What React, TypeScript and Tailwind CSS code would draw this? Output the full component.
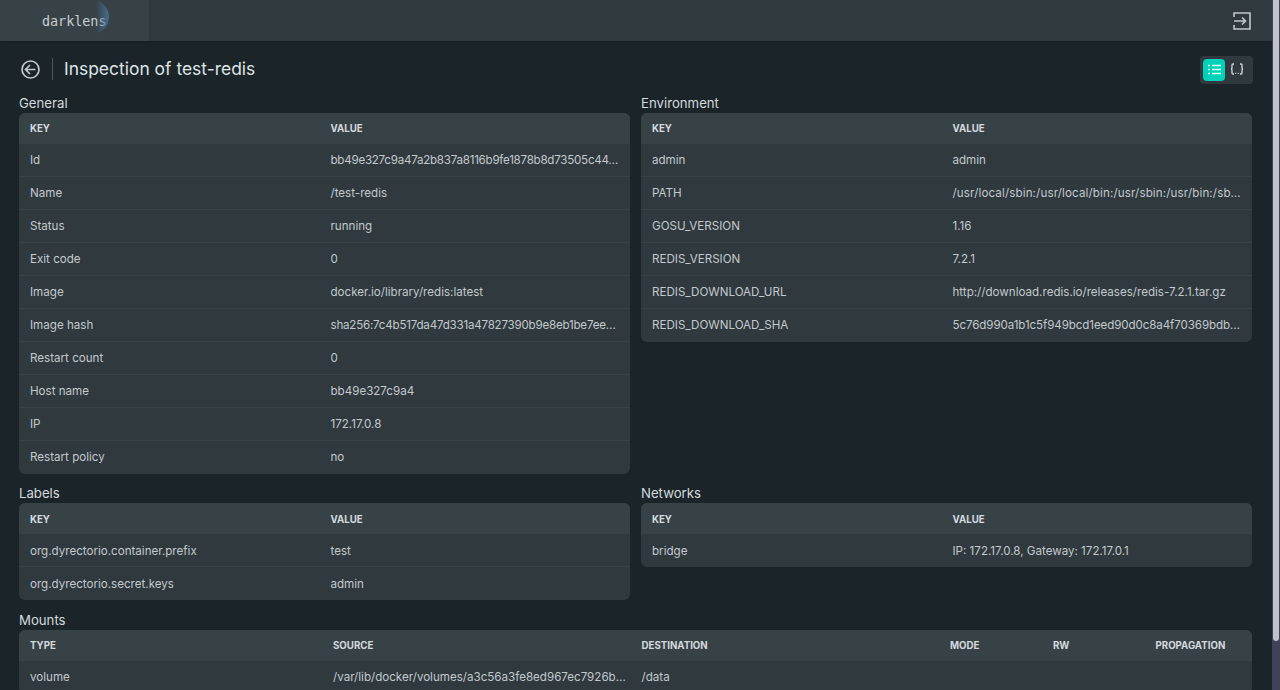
import React from 'react';

const font = { fontFamily: 'Inter' };

type Row = [string, string, string?];

const general: Row[] = [
  ['Id', 'bb49e327c9a47a2b837a8116b9fe1878b8d73505c44…', 'tracking-[-0.25px]'],
  ['Name', '/test-redis'],
  ['Status', 'running'],
  ['Exit code', '0'],
  ['Image', 'docker.io/library/redis:latest'],
  ['Image hash', 'sha256:7c4b517da47d331a47827390b9e8eb1be7ee…', 'tracking-[-0.22px]'],
  ['Restart count', '0'],
  ['Host name', 'bb49e327c9a4'],
  ['IP', '172.17.0.8'],
  ['Restart policy', 'no'],
];

const environment: Row[] = [
  ['admin', 'admin'],
  ['PATH', '/usr/local/sbin:/usr/local/bin:/usr/sbin:/usr/bin:/sb…', 'tracking-[0.13px]'],
  ['GOSU_VERSION', '1.16'],
  ['REDIS_VERSION', '7.2.1'],
  ['REDIS_DOWNLOAD_URL', 'http://download.redis.io/releases/redis-7.2.1.tar.gz'],
  ['REDIS_DOWNLOAD_SHA', '5c76d990a1b1c5f949bcd1eed90d0c8a4f70369bdb…', 'tracking-[-0.1px]'],
];

const labels: Row[] = [
  ['org.dyrectorio.container.prefix', 'test'],
  ['org.dyrectorio.secret.keys', 'admin'],
];

const networks: Row[] = [['bridge', 'IP: 172.17.0.8, Gateway: 172.17.0.1']];

const KeyValueTable = ({ title, rows, low }: { title: string; rows: Row[]; low?: boolean }) => (
  <div className="min-w-0">
    <h2 className="h-[20px] text-[13.2px] leading-5 text-[#d5dade]">{title}</h2>
    <div className="overflow-hidden rounded-md bg-[#2f393e]">
      <div className={`flex h-[31px] items-center bg-[#374247] text-[9.7px] font-bold text-[#d5dade] ${low ? 'pt-[4px]' : 'pt-[2px]'}`}>
        <div className="w-[300.5px] pl-[11px]">KEY</div>
        <div className="pl-[11px]">VALUE</div>
      </div>
      {rows.map(([k, v, spacing], i) => (
        <div
          key={k}
          className={`flex h-[33px] items-center border-b text-[11.6px] text-[#c3c9cd] ${low ? 'pt-[4px]' : 'pt-[2px]'} ${i < rows.length - 1 ? 'border-[#384348]' : 'border-transparent'}`}
        >
          <div className="w-[300.5px] truncate pl-[11px]">{k}</div>
          <div className={`min-w-0 flex-1 truncate pl-[11px] ${spacing ?? ''}`}>{v}</div>
        </div>
      ))}
    </div>
  </div>
);

export default function App() {
  return (
    <div className="flex h-[690px] overflow-hidden bg-[#1a2429]" style={font}>
      <div className="min-w-0 flex-1 overflow-hidden">
        <header className="flex h-[41px] items-center justify-between bg-[#2f393e] shadow-sm">
          <div className="flex h-full w-[149px] items-center bg-[#374247] pl-[42px]">
            <div className="relative">
              <span className="font-['DejaVu_Sans_Mono'] text-[13.4px] text-[#c9ced1]">darklens</span>
              <svg className="absolute left-[50px] top-[-8px] h-[34px] w-[17px]" viewBox="0 0 17 34">
                <defs>
                  <linearGradient id="crescent" x1="0" x2="1" y1="0" y2="0">
                    <stop offset="0.25" stopColor="#4a7099" stopOpacity="0" />
                    <stop offset="1" stopColor="#4a7099" stopOpacity="0.9" />
                  </linearGradient>
                </defs>
                <path d="M0 0A17 17 0 0 1 0 34Z" fill="url(#crescent)" />
              </svg>
            </div>
          </div>
          <svg className="mr-[21px] h-[18px] w-[18px] text-[#c3c9cd]" viewBox="0 0 18 18" fill="none" stroke="currentColor" strokeWidth="1.6">
            <path d="M1 5V1h16v16H1v-4" />
            <path d="M1 9h11M9 5.5 12.5 9 9 12.5" />
          </svg>
        </header>

        <div className="pl-[19px] pr-[20px]">
          <div className="flex h-[52px] items-center justify-between pt-[5px]">
            <div className="flex items-center">
              <svg className="ml-[2px] h-[19px] w-[19px] text-[#c3c9cd]" viewBox="0 0 19 19" fill="none" stroke="currentColor" strokeWidth="1.7">
                <circle cx="9.5" cy="9.5" r="8.5" />
                <path d="M14.5 9.5H4.5M9 5l-4.5 4.5L9 14" />
              </svg>
              <div className="ml-[12px] h-[22px] w-px bg-[#4a555b]" />
              <h1 className="ml-[11px] text-[17.45px] text-[#dfe3e6]">Inspection of test-redis</h1>
            </div>
            <div className="-mr-px flex h-[28px] w-[53px] items-center rounded bg-[#2f393e] px-[3px]">
              <div className="flex h-[22px] w-[22px] items-center justify-center rounded bg-[#00d1b8]">
                <svg className="h-[13px] w-[13px] text-[#dff]" viewBox="0 0 13 13" fill="none" stroke="currentColor" strokeWidth="1.4">
                  <path d="M0 2.5h2M0 6.5h2M0 10.5h2M4 2.5h9M4 6.5h9M4 10.5h9" />
                </svg>
              </div>
              <svg className="-mt-[2px] ml-[5px] h-[12px] w-[14px] text-[#d5dade]" viewBox="0 0 14 12" fill="none" stroke="currentColor" strokeWidth="1.3">
                <path d="M4 1H3Q2 1 2 2v2.5Q2 6 1 6q1 0 1 1.5V10q0 1 1 1h1M10 1h1q1 0 1 1v2.5Q12 6 13 6q-1 0-1 1.5V10q0 1-1 1h-1" />
                <path d="M5.2 10.3h1M7.8 10.3h1" />
              </svg>
            </div>
          </div>

          <div className="grid grid-cols-2 items-start gap-x-[11px] gap-y-[9px]">
            <KeyValueTable title="General" rows={general} />
            <KeyValueTable title="Environment" rows={environment} />
            <KeyValueTable title="Labels" rows={labels} low />
            <KeyValueTable title="Networks" rows={networks} low />
          </div>

          <div className="mt-[10px]">
            <h2 className="h-[20px] text-[13.2px] leading-5 text-[#d5dade]">Mounts</h2>
            <div className="overflow-hidden rounded-md bg-[#2f393e]">
              <div className="flex h-[31px] items-center bg-[#374247] pt-[2px] text-[9.7px] font-bold text-[#d5dade]">
                <div className="w-[303px] pl-[11px]">TYPE</div>
                <div className="w-[308.5px] pl-[11px]">SOURCE</div>
                <div className="w-[308.5px] pl-[11px]">DESTINATION</div>
                <div className="w-[103px] pl-[11px]">MODE</div>
                <div className="w-[102.5px] pl-[11px]">RW</div>
                <div className="pl-[11px]">PROPAGATION</div>
              </div>
              <div className="flex h-[33px] items-center border-b border-[#384348] pt-[2px] text-[11.6px] text-[#c3c9cd]">
                <div className="w-[303px] pl-[11px]">volume</div>
                <div className="w-[308.5px] truncate pl-[11px]">/var/lib/docker/volumes/a3c56a3fe8ed967ec7926b…</div>
                <div className="w-[308.5px] pl-[11px]">/data</div>
              </div>
            </div>
          </div>
        </div>
      </div>

      <div className="w-[8px] shrink-0 bg-[#3f4359] pl-px">
        <div className="h-[641px] w-[6px] rounded-b-sm bg-[#c0c2c6]" />
      </div>
    </div>
  );
}
